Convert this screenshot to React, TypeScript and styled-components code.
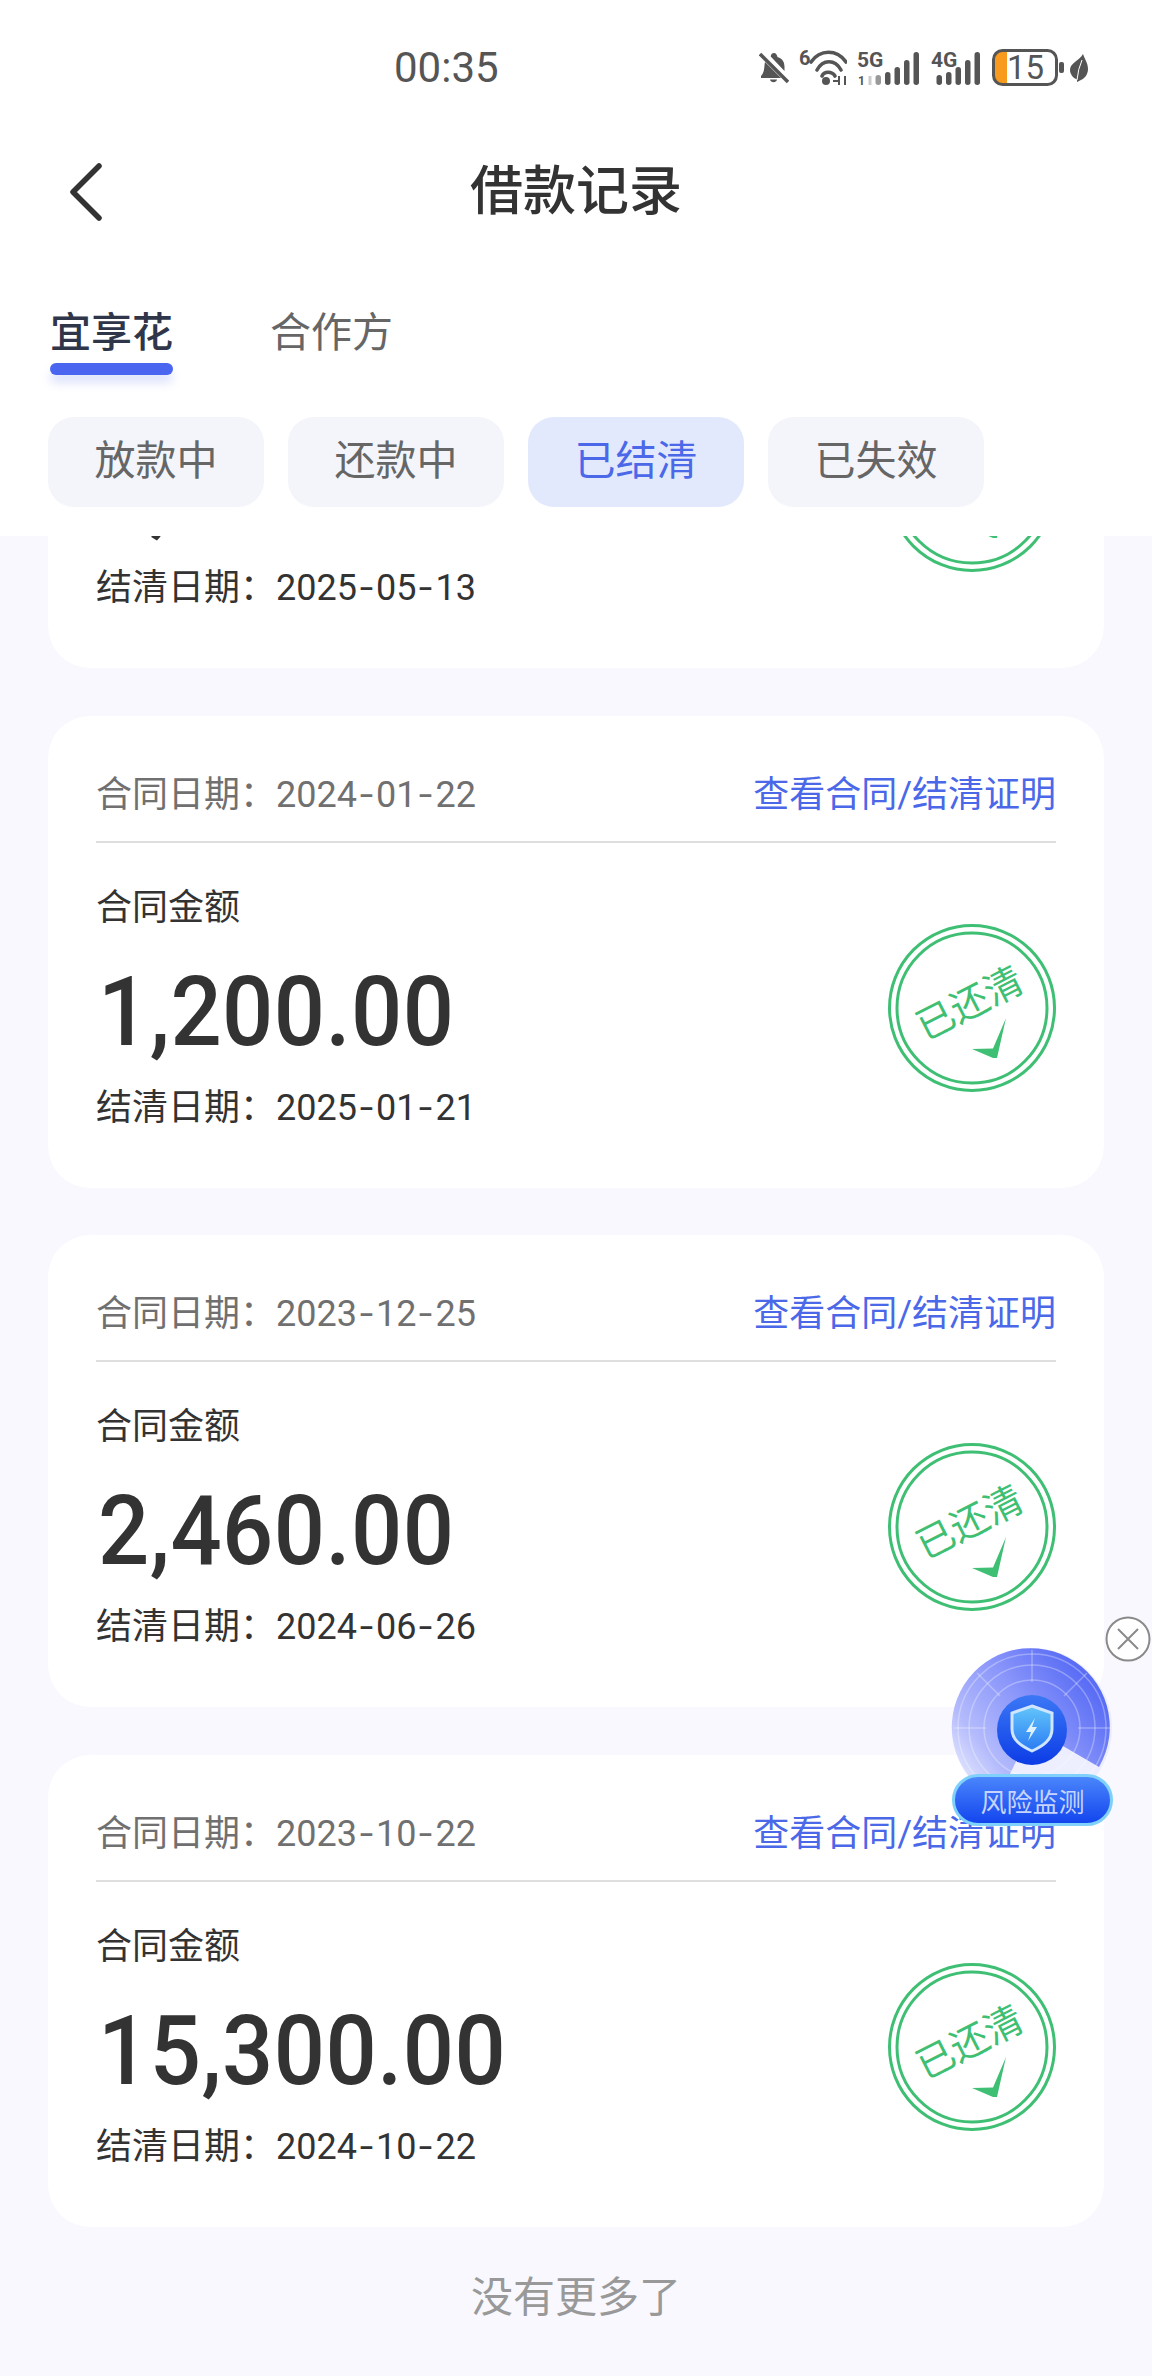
import React from "react";
import styled, { createGlobalStyle } from "styled-components";

const CJK = `Roboto, "Noto Sans CJK SC", sans-serif`;

const Global = createGlobalStyle`
  html, body { margin: 0; padding: 0; background: #f8f8fe; }
  * { box-sizing: border-box; }
  body { font-family: ${CJK}; }
`;

const Page = styled.div`
  width: 1152px;
  height: 2376px;
  position: relative;
  overflow: hidden;
  display: flex;
  flex-direction: column;
  background: #f8f8fe;
`;

const Header = styled.header`
  background: #fff;
  height: 536px;
  flex: none;
  display: flex;
  flex-direction: column;
`;

const StatusBar = styled.div`
  height: 136px;
  flex: none;
  padding: 0 64px 0 394px;
  display: flex;
  align-items: center;
  justify-content: space-between;
`;

const Clock = styled.span`
  font-size: 42px;
  line-height: 50px;
  color: #555;
  font-family: Roboto, sans-serif;
`;

const StatusIcons = styled.div`
  display: flex;
  align-items: center;
  height: 44px;
  gap: 10px;
`;

const LeafIcon = styled.svg`
  margin-left: -4px;
`;

const NavBar = styled.nav`
  height: 112px;
  flex: none;
  display: grid;
  grid-template-columns: 1fr auto 1fr;
  align-items: center;
`;

const BackIcon = styled.svg`
  margin-left: 68px;
`;

const Title = styled.h1`
  margin: 0;
  font-size: 53px;
  line-height: 70px;
  font-weight: 500;
  color: #333;
`;

const Tabs = styled.div`
  display: flex;
  gap: 97px;
  padding: 55px 0 0 50px;
`;

const Tab = styled.div<{ $active?: boolean }>`
  display: flex;
  flex-direction: column;
  width: 123px;
  font-size: 41px;
  line-height: 60px;
  white-space: nowrap;
  font-weight: ${(p) => (p.$active ? 500 : 400)};
  color: ${(p) => (p.$active ? "#30364a" : "#666")};
  &::after {
    content: "";
    height: 12px;
    border-radius: 6px;
    background: ${(p) => (p.$active ? "#4a66f0" : "transparent")};
    box-shadow: ${(p) => (p.$active ? "0 8px 10px rgba(74,102,240,.18)" : "none")};
  }
`;

const Chips = styled.div`
  display: flex;
  gap: 24px;
  padding: 42px 0 0 48px;
`;

const Chip = styled.div<{ $active?: boolean }>`
  width: 216px;
  height: 90px;
  padding-bottom: 10px;
  border-radius: 26px;
  display: flex;
  align-items: center;
  justify-content: center;
  font-size: 41px;
  background: ${(p) => (p.$active ? "#e3e9fc" : "#f4f5fa")};
  color: ${(p) => (p.$active ? "#4a68e8" : "#666")};
`;

const Viewport = styled.main`
  flex: 1;
  overflow: hidden;
`;

const List = styled.div`
  margin-top: -340px;
  display: flex;
  flex-direction: column;
  gap: 47.5px;
  padding: 0 48px;
`;

const Card = styled.article`
  height: 472px;
  background: #fff;
  border-radius: 42px;
  padding: 54px 48px 0;
`;

const CardTop = styled.div`
  display: flex;
  justify-content: space-between;
  align-items: flex-start;
  height: 73px;
  border-bottom: 2px solid #dedede;
`;

const DateText = styled.span`
  font-size: 36px;
  line-height: 50px;
  color: #707070;
`;

const ContractLink = styled.a`
  font-size: 36px;
  line-height: 50px;
  color: #4a68e8;
`;

const CardBody = styled.div`
  display: flex;
  justify-content: space-between;
`;

const Info = styled.div`
  display: flex;
  flex-direction: column;
  padding-top: 40px;
`;

const Label = styled.div`
  font-size: 36px;
  line-height: 50px;
  color: #333;
`;

const Amount = styled.div`
  margin-top: 29px;
  margin-left: 2px;
  font-family: Roboto, sans-serif;
  font-size: 97px;
  font-weight: 500;
  line-height: 100px;
  letter-spacing: 0.5px;
  color: #333;
  transform: scaleX(0.93);
  transform-origin: left center;
`;

const Settled = styled(Label)`
  margin-top: 21px;
`;

const Dash = styled.span`
  display: inline-block;
  width: 19px;
  text-align: center;
  transform: scaleX(1.35);
`;

const StampBox = styled.div`
  width: 168px;
  height: 168px;
  margin-top: 81px;
  flex: none;
`;

const Footer = styled.div`
  margin-top: 41px;
  text-align: center;
  font-size: 42px;
  line-height: 60px;
  color: #999;
`;

const CloseButton = styled.div`
  position: absolute;
  left: 1105px;
  top: 1616px;
  width: 46px;
  height: 46px;
`;

const Widget = styled.div`
  position: absolute;
  left: 950px;
  top: 1646px;
  width: 166px;
  height: 182px;
`;

const RiskPill = styled.div`
  position: absolute;
  left: 2px;
  bottom: 2px;
  width: 161px;
  height: 52px;
  border-radius: 26px;
  border: 3px solid #7fd0fb;
  background: linear-gradient(180deg, #4a86fb 0%, #1345ee 100%);
  color: #c6d4ff;
  font-size: 26px;
  display: flex;
  align-items: center;
  justify-content: center;
`;

const G = "#555";
const ICON_FONT = "Roboto, sans-serif";

const BellOff = () => (
  <svg width="30" height="32" viewBox="0 0 30 32">
    <path d="M15 1c-2 0-3 1.500-3.300 3.500L25.500 19V15c0-5-2-8.500-7-10C18 3 17 1 15 1z" fill={G} />
    <path d="M6 10C5 14 6 20 2 24v2h20z" fill={G} />
    <path d="M11 27.500h7c-.5 3.500-6.500 3.500-7 0z" fill={G} />
    <path d="M1 2l28 28" stroke={G} strokeWidth="3.600" />
  </svg>
);

const Wifi = () => (
  <svg width="48" height="44" viewBox="0 -4 48 44">
    <text x="0" y="15" fontSize="20" fontWeight="700" fill={G} fontFamily={ICON_FONT}>6</text>
    <g fill="none" stroke={G} strokeWidth="3.600" strokeLinecap="round">
      <path d="M12 12C21 -1 38 -1 47 12" />
      <path d="M18 20C24 9 36 9 42 20" />
      <path d="M23 26c2-5 10-5 13 0" />
    </g>
    <circle cx="27" cy="31" r="4" fill={G} />
    <path d="M34 31h6M40 26v9M46 26v9" stroke={G} strokeWidth="2" />
  </svg>
);

const BAR_HEIGHTS = [10, 13, 18, 25, 33];

const Bars = ({ right, faint }: { right: number; faint?: boolean }) => (
  <>
    {BAR_HEIGHTS.map((h, i) => (
      <rect
        key={h}
        x={right - 5.5 - (4 - i) * 9.5}
        y={34 - h}
        width="5.500"
        height={h}
        rx="2.700"
        fill={faint && i === 0 ? "#999" : G}
      />
    ))}
  </>
);

const Signal5G = () => (
  <svg width="64" height="44" viewBox="0 -5 64 44">
    <text x="0" y="16" fontSize="21" fontWeight="700" fill={G} fontFamily={ICON_FONT}>5G</text>
    <text x="1" y="34" fontSize="12" fontWeight="700" fill={G} fontFamily={ICON_FONT}>1</text>
    <path d="M13 25v9" stroke="#ccc" strokeWidth="3" />
    <Bars right={62} faint />
  </svg>
);

const Signal4G = () => (
  <svg width="51" height="44" viewBox="0 -5 51 44">
    <text x="0" y="16" fontSize="21" fontWeight="700" fill={G} fontFamily={ICON_FONT}>4G</text>
    <Bars right={49} />
  </svg>
);

const Battery = () => (
  <svg width="72" height="44" viewBox="0 -3 72 44">
    <defs>
      <clipPath id="batt"><rect x="1" y="1" width="63" height="35" rx="9" /></clipPath>
    </defs>
    <rect x="1" y="1" width="14" height="36" fill="#f79a1e" clipPath="url(#batt)" />
    <rect x="1.500" y="1.500" width="63" height="34" rx="9" fill="none" stroke={G} strokeWidth="3" />
    <text x="15" y="30" fontSize="33" fill={G} fontFamily={ICON_FONT}>15</text>
    <rect x="67" y="13" width="5" height="11" rx="2" fill={G} />
  </svg>
);

const Leaf = () => (
  <LeafIcon width="18" height="28" viewBox="0 0 18 28">
    <path d="M13 0C15 6 18 9 18 15c0 6-4 10-8 11.500L7 28v-2.500C3 24 0 20 0 16 0 9 9 7 13 0z" fill={G} />
    <path d="M7 26Q8 15 12 6" fill="none" stroke="#fff" strokeWidth="1" />
  </LeafIcon>
);

const Stamp = () => (
  <svg width="168" height="168" viewBox="0 0 168 168">
    <g fill="none" stroke="#3fbf73" strokeWidth="3">
      <circle cx="84" cy="84" r="82.500" />
      <circle cx="84" cy="84" r="75" />
    </g>
    <text
      x="83"
      y="82"
      fontSize="38"
      textAnchor="middle"
      dominantBaseline="middle"
      fill="#3fbf73"
      fontFamily={`"Noto Sans CJK SC", sans-serif`}
      transform="rotate(-27 83 82)"
    >
      已还清
    </text>
    <path d="M84 125L105 124.500L118 94L109 134L105 134Z" fill="#3fbf73" />
  </svg>
);

const Radar = () => (
  <svg width="166" height="182" viewBox="0 0 166 182">
    <defs>
      <linearGradient id="sweep" x1="0.15" y1="0.95" x2="0.95" y2="0.35">
        <stop offset="0" stopColor="#dfe3fe" />
        <stop offset="0.22" stopColor="#b4bbfc" />
        <stop offset="0.6" stopColor="#8a96fa" />
        <stop offset="1" stopColor="#5a6df5" />
      </linearGradient>
      <linearGradient id="core" x1="0" y1="0" x2="0" y2="1">
        <stop offset="0" stopColor="#3b78f5" />
        <stop offset="1" stopColor="#0c3ce6" />
      </linearGradient>
      <linearGradient id="shield" x1="0" y1="0" x2="0" y2="1">
        <stop offset="0" stopColor="#63c6fb" />
        <stop offset="1" stopColor="#2b7bf3" />
      </linearGradient>
    </defs>
    <circle cx="82" cy="82" r="80" fill="#e8eafe" opacity="0.8" />
    <path d="M82 82L149 121A79 79 0 1 0 48 153Z" fill="url(#sweep)" />
    <g fill="none" stroke="#fff" strokeOpacity="0.3" strokeWidth="1.500">
      <circle cx="82" cy="82" r="48" />
      <circle cx="82" cy="82" r="63" />
      <circle cx="82" cy="82" r="74" />
      <path d="M82 4V36M4 82H36M128 82H160M27 27L50 50M137 27L114 50" />
    </g>
    <circle cx="82" cy="84" r="35" fill="url(#core)" />
    <path d="M82 60l20 7v16c0 11-9 17-20 22-11-5-20-11-20-22V67z" fill="url(#shield)" stroke="#cfe6ff" strokeWidth="3" />
    <path d="M85 72l-9 14h5l-3 9 9-14h-5z" fill="#dff1ff" />
  </svg>
);

const Close = () => (
  <svg width="46" height="46" viewBox="0 0 46 46">
    <circle cx="23" cy="23" r="21.500" fill="#fff" stroke="#8a8a8a" strokeWidth="2" />
    <path d="M13 13l20 20M33 13L13 33" stroke="#8a8a8a" strokeWidth="2" />
  </svg>
);

const DateValue = ({ value }: { value: string }) => {
  const parts = value.split("-");
  return (
    <>
      {parts.map((part, i) => (
        <React.Fragment key={i}>
          {i > 0 && <Dash>-</Dash>}
          {part}
        </React.Fragment>
      ))}
    </>
  );
};

const records = [
  { contract: "2024-05-13", amount: "1,000.00", settled: "2025-05-13" },
  { contract: "2024-01-22", amount: "1,200.00", settled: "2025-01-21" },
  { contract: "2023-12-25", amount: "2,460.00", settled: "2024-06-26" },
  { contract: "2023-10-22", amount: "15,300.00", settled: "2024-10-22" },
];

export default function App() {
  return (
    <Page>
      <Global />
      <Header>
        <StatusBar>
          <Clock>00:35</Clock>
          <StatusIcons>
            <BellOff />
            <Wifi />
            <Signal5G />
            <Signal4G />
            <Battery />
            <Leaf />
          </StatusIcons>
        </StatusBar>
        <NavBar>
          <BackIcon width="36" height="60" viewBox="0 0 36 60">
            <path d="M31 4L5 30l26 26" fill="none" stroke="#333" strokeWidth="5.500" strokeLinecap="round" strokeLinejoin="round" />
          </BackIcon>
          <Title>借款记录</Title>
        </NavBar>
        <Tabs>
          <Tab $active>宜享花</Tab>
          <Tab>合作方</Tab>
        </Tabs>
        <Chips>
          <Chip>放款中</Chip>
          <Chip>还款中</Chip>
          <Chip $active>已结清</Chip>
          <Chip>已失效</Chip>
        </Chips>
      </Header>
      <Viewport>
        <List>
          {records.map((r) => (
            <Card key={r.contract}>
              <CardTop>
                <DateText>合同日期：<DateValue value={r.contract} /></DateText>
                <ContractLink>查看合同/结清证明</ContractLink>
              </CardTop>
              <CardBody>
                <Info>
                  <Label>合同金额</Label>
                  <Amount>{r.amount}</Amount>
                  <Settled>结清日期：<DateValue value={r.settled} /></Settled>
                </Info>
                <StampBox>
                  <Stamp />
                </StampBox>
              </CardBody>
            </Card>
          ))}
        </List>
        <Footer>没有更多了</Footer>
      </Viewport>
      <CloseButton>
        <Close />
      </CloseButton>
      <Widget>
        <Radar />
        <RiskPill>风险监测</RiskPill>
      </Widget>
    </Page>
  );
}
